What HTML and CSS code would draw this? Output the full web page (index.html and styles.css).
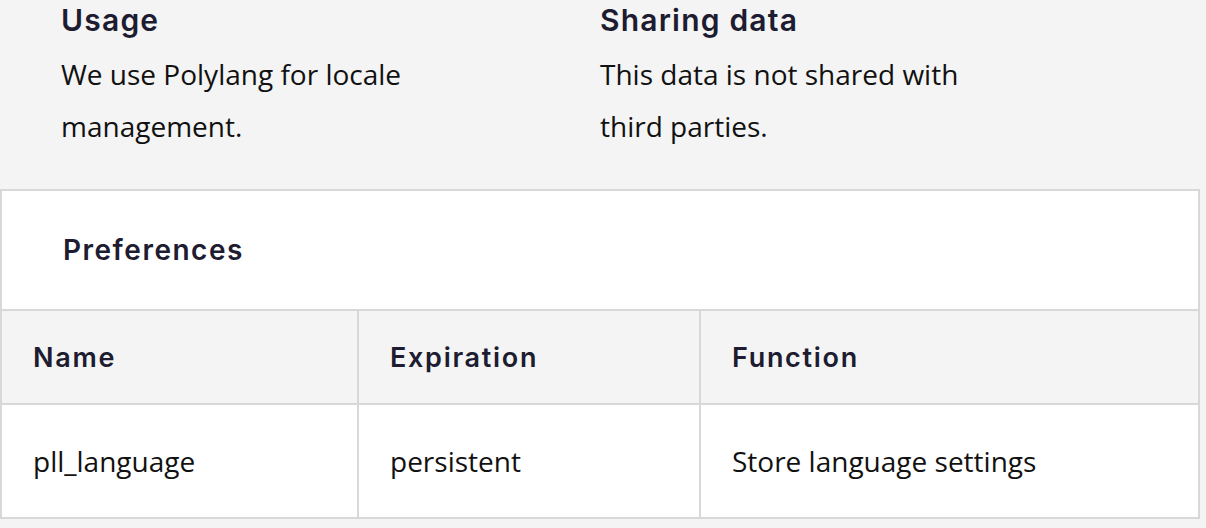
FILE: index.html
```html
<!DOCTYPE html>
<html lang="en">
<head>
<meta charset="utf-8">
<title>Cookie details</title>
<link rel="stylesheet" href="styles.css">
</head>
<body>
  <section class="info">
    <div class="info-col">
      <h3 class="info-title">Usage</h3>
      <p class="info-text">We use Polylang for locale management.</p>
    </div>
    <div class="info-col">
      <h3 class="info-title">Sharing data</h3>
      <p class="info-text">This data is not shared with third parties.</p>
    </div>
  </section>
  <section class="card">
    <div class="card-head">
      <h2 class="card-title">Preferences</h2>
    </div>
    <div class="grid">
      <div class="cell head">Name</div>
      <div class="cell head">Expiration</div>
      <div class="cell head">Function</div>
      <div class="cell data">pll_language</div>
      <div class="cell data">persistent</div>
      <div class="cell data">Store language settings</div>
    </div>
  </section>
</body>
</html>
```
FILE: styles.css
```css
* { box-sizing: border-box; }

html, body {
  margin: 0;
  padding: 0;
  background: #f4f4f4;
}

body {
  width: 1206px;
  height: 528px;
  overflow: hidden;
  font-family: "Open Sans", "Noto Sans", sans-serif;
  color: #111111;
}

.info {
  display: flex;
  gap: 139px;
  padding: 0 0 37px 61px;
}

.info-col {
  width: 400px;
}

.info-title {
  margin: 0;
  font-family: Inter, "Noto Sans", sans-serif;
  font-weight: 600;
  font-size: 30px;
  letter-spacing: 1.2px;
  line-height: 40px;
  color: #1d1c30;
}

.info-text {
  margin: 8px 0 0;
  font-size: 28px;
  line-height: 52px;
}

.card {
  width: 1200px;
  border: 2px solid #d8d8d8;
  background: #d8d8d8;
}

.card-head {
  height: 118px;
  display: flex;
  align-items: center;
  padding-left: 61px;
  background: #ffffff;
  margin-bottom: 2px;
}

.card-title {
  margin: 0;
  font-family: Inter, "Noto Sans", sans-serif;
  font-weight: 600;
  font-size: 28px;
  letter-spacing: 1.5px;
  color: #1d1c30;
}

.grid {
  display: grid;
  grid-template-columns: 355px 340px 1fr;
  grid-template-rows: 92px 112px;
  gap: 2px;
}

.cell {
  display: flex;
  align-items: center;
  padding-left: 31px;
}

.cell.head {
  background: #f4f4f4;
  font-family: Inter, "Noto Sans", sans-serif;
  font-weight: 600;
  font-size: 27px;
  letter-spacing: 1.7px;
  color: #1d1c30;
}

.cell.data {
  background: #ffffff;
  font-size: 28px;
  padding-bottom: 1px;
}
```
